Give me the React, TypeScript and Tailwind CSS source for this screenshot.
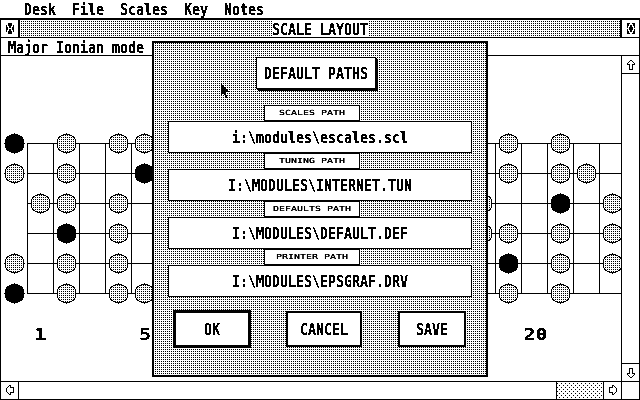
import React from "react";

const DITHER =
  "bg-black bg-[image:linear-gradient(#fff_1px,transparent_0),linear-gradient(90deg,#fff_1px,transparent_0)] bg-[size:2px_2px]";

const CLOSE = ["..XXXX..", "..XXXX..", "X.XXXX.X", "X..XX..X", "XX.XX.XX", "XX....XX", "XX.XX.XX", "X..XX..X", "X.XXXX.X", "..XXXX..", "..XXXX.."];
const FULL = ["XXX..XXX", "XX....XX", "XX.XX.XX", "X..XX..X", "X.XXXX.X", "..XXXX..", "X.XXXX.X", "X..XX..X", "XX.XX.XX", "XX....XX", "XXX..XXX"];
const UP = ["...XX...", "..X..X..", ".X....X.", "X......X", "XXX..XXX", "..X..X..", "..X..X..", "..X..X..", "..X..X..", "..XXXX.."];
const DOWN = [...UP].reverse();
const LEFT = ["...XX...", "..X.X...", ".X..XXXX", "X......X", "X......X", "X......X", "X......X", ".X..XXXX", "..X.X...", "...XX..."];
const RIGHT = LEFT.map((r) => r.split("").reverse().join(""));
const POINTER = [
  "X.......", "XX......", "XXX.....", "XXXX....", "XXXXX...", "XXXXXX..", "XXXXXXX.",
  "XXXXXXXX", "XXXXX...", "XX.XX...", "X..XX...", "....XX..", "....XX..", ".....X..",
];

function Pixels({ rows, className = "" }: { rows: string[]; className?: string }) {
  const w = rows[0].length;
  return (
    <svg width={w} height={rows.length} viewBox={`0 0 ${w} ${rows.length}`} shapeRendering="crispEdges" className={`block shrink-0 ${className}`}>
      {rows.flatMap((row, y) =>
        row.split("").map((c, x) => (c === "X" ? <rect key={`${x}-${y}`} x={x} y={y} width={1} height={1} /> : null))
      )}
    </svg>
  );
}

/* System font: every character sits in an 8x16 cell. */
function Sys({ children, className = "" }: { children: string; className?: string }) {
  return (
    <span className={`block h-4 shrink-0 ${className}`} style={{ width: children.length * 8 }}>
      <span className="block w-max origin-left scale-x-[0.8306] whitespace-pre font-['DejaVu_Sans_Mono',monospace] text-[16px] font-bold leading-4 [filter:url(#crisp)]">
        {children}
      </span>
    </span>
  );
}

/* Small font: 6px wide cells. */
function Small({ children }: { children: string }) {
  return (
    <span className="block h-2 shrink-0" style={{ width: children.length * 6 }}>
      <span className="block w-max origin-left scale-x-[1.4238] whitespace-pre font-['DejaVu_Sans_Mono',monospace] text-[7px] leading-2 [filter:url(#fine)]">
        {children}
      </span>
    </span>
  );
}

const STRINGS = [143, 173, 203, 233, 263, 293];
const FRETS = Array.from({ length: 23 }, (_, i) => 27 + i * 26);
const NOTES: [number, number, boolean][] = [
  [14, 143, true], [66, 143, false], [118, 143, false], [144, 143, false], [508, 143, false], [560, 143, false],
  [14, 173, false], [66, 173, false], [144, 173, true], [508, 173, false], [560, 173, false], [586, 173, false],
  [40, 203, false], [66, 203, false], [118, 203, false], [482, 203, false], [560, 203, true], [612, 203, false],
  [66, 233, true], [118, 233, false], [482, 233, false], [508, 233, false], [560, 233, false], [612, 233, false],
  [14, 263, false], [66, 263, false], [118, 263, false], [508, 263, true], [560, 263, false], [612, 263, false],
  [14, 293, true], [66, 293, false], [118, 293, false], [144, 293, false], [508, 293, false], [560, 293, false],
];
const HALF = [10, 9, 9, 9, 9, 8, 8, 7, 5, 3, 0];

function Note({ x, y, root }: { x: number; y: number; root: boolean }) {
  const rows = Array.from({ length: 21 }, (_, i) => i - 10);
  return (
    <g>
      {rows.map((d) => {
        const h = HALF[Math.abs(d)];
        return <rect key={d} x={x - h} y={y + d} width={2 * h + 1} height={1} />;
      })}
      {!root &&
        rows.map((d) => {
          const a = Math.abs(d);
          if (a > 8) return null;
          const h = Math.min(HALF[a] - 1, HALF[a + 1]);
          return (
            <g key={d}>
              <rect x={x - h} y={y + d} width={2 * h + 1} height={1} fill="#fff" />
              <rect x={x - h} y={y + d} width={2 * h + 1} height={1} fill="url(#dots)" />
            </g>
          );
        })}
    </g>
  );
}

function Fretboard() {
  const label = "font-['DejaVu_Sans_Mono',monospace] text-[16px] font-bold";
  return (
    <svg width="620" height="325" viewBox="1 56 620 325" shapeRendering="crispEdges" className="block shrink-0">
      <defs>
        <pattern id="dots" width="2" height="2" patternUnits="userSpaceOnUse">
          <rect x="1" y="1" width="1" height="1" />
        </pattern>
      </defs>
      {STRINGS.map((y) => <rect key={y} x={27} y={y} width={594} height={1} />)}
      {FRETS.map((x) => <rect key={x} x={x} y={143} width={1} height={151} />)}
      {NOTES.map(([x, y, r]) => <Note key={`${x}-${y}`} x={x} y={y} root={r} />)}
      <g filter="url(#crisp)" className={label}>
        <text x="34.5" y="340" textLength="12" lengthAdjust="spacingAndGlyphs">1</text>
        <text x="139" y="340" textLength="12" lengthAdjust="spacingAndGlyphs">5</text>
        <text x="523.5" y="340" textLength="24" lengthAdjust="spacingAndGlyphs">20</text>
      </g>
    </svg>
  );
}

function PathField({ label, value }: { label: string; value: string }) {
  return (
    <div className="flex w-[304px] flex-col">
      <div className="ml-24 flex h-4 w-24 items-center justify-center border border-black bg-white">
        <Small>{label}</Small>
      </div>
      <div className="flex h-8 items-center justify-center border border-black bg-white pt-[2px]">
        <Sys>{value}</Sys>
      </div>
    </div>
  );
}

function Dialog() {
  return (
    <div className={`absolute left-[152px] top-[41px] h-[336px] w-[336px] border-2 border-black bg-[position:0_-1px] ${DITHER}`}>
      <div className="flex flex-col pl-[14px] pt-[14px]">
        <div className="ml-[88px] flex h-8 w-[120px] items-center justify-center border border-black bg-white pt-[2px] shadow-[1px_1px_0_#000,2px_2px_0_#000]">
          <Sys>DEFAULT PATHS</Sys>
        </div>
        <div className="mt-4 flex flex-col">
          <PathField label="SCALES PATH" value="i:\modules\escales.scl" />
          <PathField label="TUNING PATH" value="I:\MODULES\INTERNET.TUN" />
          <PathField label="DEFAULTS PATH" value="I:\MODULES\DEFAULT.DEF" />
          <PathField label="PRINTER PATH" value="I:\MODULES\EPSGRAF.DRV" />
        </div>
        <div className="ml-[5px] mt-[13px] flex items-center">
          <button className="flex h-[38px] w-[78px] items-center justify-center border-3 border-black bg-white pt-[2px]"><Sys>OK</Sys></button>
          <button className="ml-[35px] flex h-9 w-[76px] items-center justify-center border-2 border-black bg-white pt-[2px]"><Sys>CANCEL</Sys></button>
          <button className="ml-9 flex h-9 w-[68px] items-center justify-center border-2 border-black bg-white pt-[2px]"><Sys>SAVE</Sys></button>
        </div>
      </div>
      <Pixels rows={POINTER} className="absolute left-[67px] top-[41px]" />
    </div>
  );
}

export default function App() {
  return (
    <div className="relative flex h-[400px] w-[640px] flex-col overflow-hidden bg-white text-black">
      <svg width="0" height="0" className="absolute">
        <filter id="crisp" x="0" y="-0.2" width="1" height="1.4" colorInterpolationFilters="sRGB">
          <feComponentTransfer>
            <feFuncA type="discrete" tableValues="0 0 1 1 1" />
          </feComponentTransfer>
        </filter>
        <filter id="fine" x="0" y="-0.2" width="1" height="1.4" colorInterpolationFilters="sRGB">
          <feComponentTransfer>
            <feFuncA type="linear" slope="1.7" intercept="0" />
          </feComponentTransfer>
        </filter>
      </svg>

      <nav className="flex h-[18px] gap-4 pl-6 pt-[2px]">
        <Sys>Desk</Sys>
        <Sys>File</Sys>
        <Sys>Scales</Sys>
        <Sys>Key</Sys>
        <Sys>Notes</Sys>
      </nav>

      <main className="flex h-[382px] flex-col border-x border-b border-t-2 border-black">
        <header className="flex h-[18px] border-b border-black">
          <div className="flex w-[19px] justify-center border-r-2 border-black pt-[3px]"><Pixels rows={CLOSE} /></div>
          <div className={`flex w-[600px] justify-center ${DITHER}`}>
            <div className="h-[17px] w-24 bg-white pt-[2px]"><Sys>SCALE LAYOUT</Sys></div>
          </div>
          <div className="flex w-[19px] justify-center border-l-2 border-black pt-[3px]"><Pixels rows={FULL} /></div>
        </header>
        <div className="flex h-[18px] border-b border-black pl-[7px] pt-[2px]"><Sys>Major Ionian mode</Sys></div>
        <div className="flex h-[325px]">
          <Fretboard />
          <aside className="flex w-[18px] flex-col justify-between border-l border-black">
            <div className="flex h-[18px] items-start justify-center border-b border-black pt-1"><Pixels rows={UP} /></div>
            <div className="flex h-[18px] items-start justify-center border-t border-black pt-1"><Pixels rows={DOWN} /></div>
          </aside>
        </div>
        <footer className="flex h-[18px] border-t border-black">
          <div className="flex w-[18px] justify-center border-r border-black pt-[3px]"><Pixels rows={LEFT} /></div>
          <div className="w-[537px]" />
          <div className="w-12 border-x border-black">
            <svg width="46" height="17" shapeRendering="crispEdges" className="block">
              <defs>
                <pattern id="sparse" width="4" height="4" patternUnits="userSpaceOnUse">
                  <rect x="0" y="1" width="1" height="1" />
                  <rect x="2" y="3" width="1" height="1" />
                </pattern>
              </defs>
              <rect width="46" height="17" fill="url(#sparse)" />
            </svg>
          </div>
          <div className="flex w-[17px] justify-center pt-[3px]"><Pixels rows={RIGHT} /></div>
          <div className="w-[18px] border-l border-black" />
        </footer>
      </main>

      <Dialog />
    </div>
  );
}
